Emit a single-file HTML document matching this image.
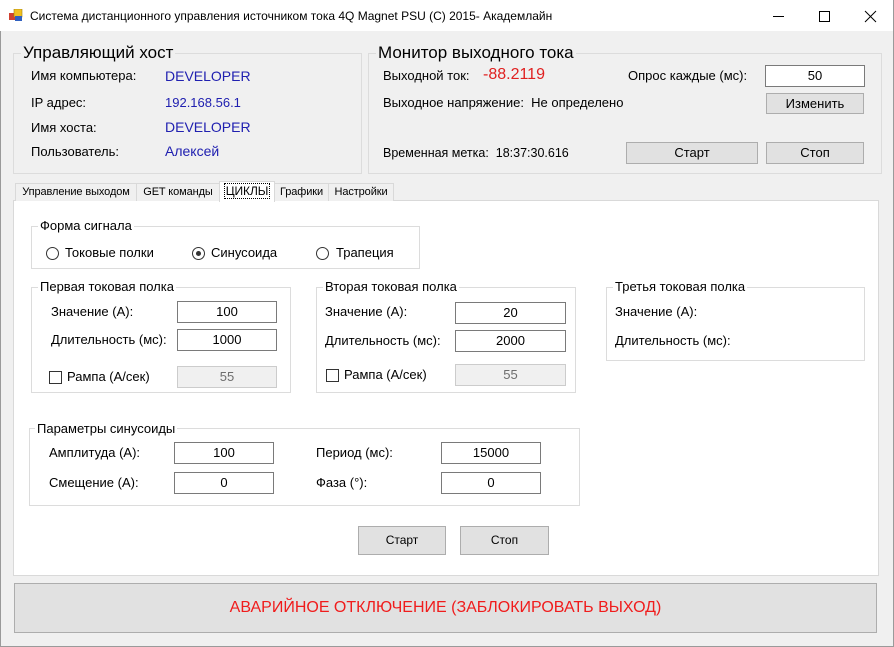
<!DOCTYPE html>
<html><head><meta charset="utf-8"><style>
*{box-sizing:border-box;margin:0;padding:0}
body{width:894px;height:647px;overflow:hidden;background:#f0f0f0;font-family:"Liberation Sans",sans-serif;font-size:13px;color:#000;position:relative}
.a{position:absolute;white-space:nowrap}
.t{position:absolute;white-space:nowrap;line-height:16px;transform:translateY(-8px)}
.g{position:absolute;border:1px solid #dcdcdc}
.lg{position:absolute;white-space:nowrap;padding:0 2px;line-height:16px;transform:translateY(-8px)}
.in{position:absolute;background:#fff;border:1px solid #7a7a7a;text-align:center;line-height:19px;font-size:13px}
.dis{background:#f0f0f0;border-color:#cccccc;color:#6d6d6d}
.bt{position:absolute;background:#e1e1e1;border:1px solid #adadad;text-align:center}
.blue{color:#2020b0}
.rad{position:absolute;width:13px;height:13px;border:1px solid #333;border-radius:50%;background:#fff}
.chk{position:absolute;width:13px;height:13px;border:1px solid #333;background:#fff}
.tab{position:absolute;top:183px;height:18px;border:1px solid #d9d9d9;border-bottom:none;background:#f0f0f0;font-size:11px;line-height:16px;text-align:center;letter-spacing:-0.1px}
</style></head><body>
<div class="a" style="left:0;top:0;width:894px;height:31px;background:#fff"></div>
<div class="a" style="left:0;top:31px;width:1px;height:616px;background:#9a9a9a"></div>
<div class="a" style="left:893px;top:0;width:1px;height:647px;background:#9a9a9a"></div>
<div class="a" style="left:0;top:646px;width:894px;height:1px;background:#9a9a9a"></div>
<svg class="a" style="left:9px;top:9px" width="16" height="14" viewBox="0 0 16 14"><rect x="0" y="4" width="7" height="7" fill="#d04030"/><rect x="5" y="0" width="8" height="8" fill="#f0c020" stroke="#a08010" stroke-width=".6"/><rect x="6" y="7" width="7" height="5" fill="#3060c0"/></svg>
<div class="t" style="left:30px;top:16px;font-size:12px">Система дистанционного управления источником тока 4Q Magnet PSU (C) 2015- Академлайн</div>
<svg class="a" style="left:772px;top:9px" width="110" height="14"><line x1="1" y1="7.5" x2="12" y2="7.5" stroke="#000"/><rect x="47.5" y="2.5" width="10" height="10" fill="none" stroke="#000"/><path d="M93 2 L104 13 M104 2 L93 13" stroke="#000"/></svg>

<div class="g" style="left:13px;top:53px;width:349px;height:121px"></div>
<div class="lg" style="left:21px;top:53px;font-size:17px;background:#f0f0f0">Управляющий хост</div>
<div class="t" style="left:31px;top:76px">Имя компьютера:</div>
<div class="t blue" style="left:165px;top:76px;font-size:14px">DEVELOPER</div>
<div class="t" style="left:31px;top:103px">IP адрес:</div>
<div class="t blue" style="left:165px;top:103px">192.168.56.1</div>
<div class="t" style="left:31px;top:128px">Имя хоста:</div>
<div class="t blue" style="left:165px;top:127px;font-size:14px">DEVELOPER</div>
<div class="t" style="left:31px;top:152px">Пользователь:</div>
<div class="t blue" style="left:165px;top:151px;font-size:14px">Алексей</div>

<div class="g" style="left:368px;top:53px;width:514px;height:121px"></div>
<div class="lg" style="left:376px;top:53px;font-size:17px;background:#f0f0f0">Монитор выходного тока</div>
<div class="t" style="left:383px;top:76px">Выходной ток:</div>
<div class="t" style="left:483px;top:75px;font-size:16px;color:#e02020">-88.2119</div>
<div class="t" style="left:628px;top:76px">Опрос каждые (мс):</div>
<div class="in" style="left:765px;top:65px;width:100px;height:22px">50</div>
<div class="t" style="left:383px;top:103px">Выходное напряжение:&nbsp; Не определено</div>
<div class="bt" style="left:766px;top:93px;width:98px;height:21px;line-height:19px">Изменить</div>
<div class="t" style="left:383px;top:153px;font-size:12.5px">Временная метка:&nbsp; 18:37:30.616</div>
<div class="bt" style="left:626px;top:142px;width:132px;height:22px;line-height:20px">Старт</div>
<div class="bt" style="left:766px;top:142px;width:98px;height:22px;line-height:20px">Стоп</div>

<div class="a" style="left:13px;top:200px;width:866px;height:376px;background:#fff;border:1px solid #d9d9d9"></div>
<div class="tab" style="left:15px;width:122px">Управление выходом</div>
<div class="tab" style="left:136px;width:84px">GET команды</div>
<div class="tab" style="left:274px;width:55px">Графики</div>
<div class="tab" style="left:328px;width:66px">Настройки</div>
<div class="tab" style="left:219px;top:181px;width:56px;height:21px;background:#fff;padding-top:1px;font-size:12px"><span style="outline:1px dotted #000;padding:0 1px">ЦИКЛЫ</span></div>

<div class="g" style="left:31px;top:226px;width:389px;height:43px"></div>
<div class="lg" style="left:38px;top:226px;background:#fff">Форма сигнала</div>
<div class="rad" style="left:46px;top:247px"></div>
<div class="t" style="left:65px;top:253px">Токовые полки</div>
<div class="rad" style="left:192px;top:247px"></div><div class="a" style="left:196px;top:251px;width:5px;height:5px;border-radius:50%;background:#333"></div>
<div class="t" style="left:211px;top:253px">Синусоида</div>
<div class="rad" style="left:316px;top:247px"></div>
<div class="t" style="left:336px;top:253px">Трапеция</div>

<div class="g" style="left:31px;top:287px;width:260px;height:106px"></div>
<div class="lg" style="left:38px;top:287px;background:#fff">Первая токовая полка</div>
<div class="t" style="left:51px;top:312px">Значение (А):</div>
<div class="in" style="left:177px;top:301px;width:100px;height:22px">100</div>
<div class="t" style="left:51px;top:340px">Длительность (мс):</div>
<div class="in" style="left:177px;top:329px;width:100px;height:22px">1000</div>
<div class="chk" style="left:49px;top:371px"></div>
<div class="t" style="left:67px;top:377px">Рампа (А/сек)</div>
<div class="in dis" style="left:177px;top:366px;width:100px;height:22px">55</div>

<div class="g" style="left:316px;top:287px;width:260px;height:106px"></div>
<div class="lg" style="left:323px;top:287px;background:#fff">Вторая токовая полка</div>
<div class="t" style="left:325px;top:312px">Значение (А):</div>
<div class="in" style="left:455px;top:302px;width:111px;height:22px">20</div>
<div class="t" style="left:325px;top:341px">Длительность (мс):</div>
<div class="in" style="left:455px;top:330px;width:111px;height:22px">2000</div>
<div class="chk" style="left:326px;top:369px"></div>
<div class="t" style="left:344px;top:375px">Рампа (А/сек)</div>
<div class="in dis" style="left:455px;top:364px;width:111px;height:22px">55</div>

<div class="g" style="left:606px;top:287px;width:259px;height:74px"></div>
<div class="lg" style="left:613px;top:287px;background:#fff">Третья токовая полка</div>
<div class="t" style="left:615px;top:312px">Значение (А):</div>
<div class="t" style="left:615px;top:341px">Длительность (мс):</div>

<div class="g" style="left:29px;top:428px;width:551px;height:78px"></div>
<div class="lg" style="left:35px;top:429px;background:#fff">Параметры синусоиды</div>
<div class="t" style="left:49px;top:453px">Амплитуда (А):</div>
<div class="in" style="left:174px;top:442px;width:100px;height:22px">100</div>
<div class="t" style="left:49px;top:483px">Смещение (А):</div>
<div class="in" style="left:174px;top:472px;width:100px;height:22px">0</div>
<div class="t" style="left:316px;top:453px">Период (мс):</div>
<div class="in" style="left:441px;top:442px;width:100px;height:22px">15000</div>
<div class="t" style="left:316px;top:483px">Фаза (°):</div>
<div class="in" style="left:441px;top:472px;width:100px;height:22px">0</div>

<div class="bt" style="left:358px;top:526px;width:88px;height:29px;line-height:27px;font-size:12px">Старт</div>
<div class="bt" style="left:460px;top:526px;width:89px;height:29px;line-height:27px;font-size:12px">Стоп</div>

<div class="bt" style="left:14px;top:583px;width:863px;height:50px;line-height:48px;font-size:16px;color:#f01c1c">АВАРИЙНОЕ ОТКЛЮЧЕНИЕ (ЗАБЛОКИРОВАТЬ ВЫХОД)</div>
</body></html>
